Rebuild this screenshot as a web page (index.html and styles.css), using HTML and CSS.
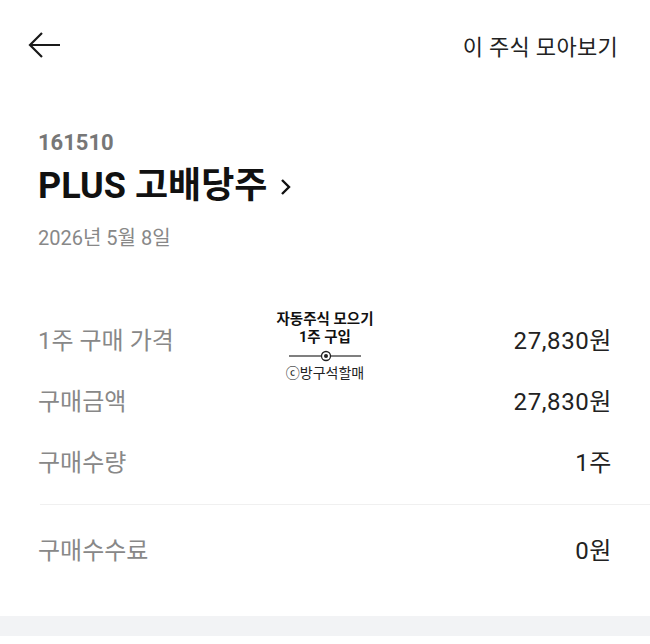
FILE: index.html
```html
<!DOCTYPE html>
<html>

<head>
    <link rel="stylesheet" href="styles.css">
</head>

<body>
    <div id="page">
        <div class="header">
            <svg class="back" width="34" height="28" viewBox="0 0 34 28">
                <path d="M15 2 L3 14 L15 26 M3 14 H33" fill="none" stroke="#1a1a1a" stroke-width="2.2" />
            </svg>
            <div class="header-link">이 주식 모아보기</div>
        </div>

        <div class="stock">
            <div class="code">161510</div>
            <div class="name">PLUS 고배당주
                <svg class="chevron" width="12" height="20" viewBox="0 0 12 20">
                    <path d="M2 3 L9 10 L2 17" fill="none" stroke="#111" stroke-width="2.4" />
                </svg>
            </div>
            <div class="date">2026년 5월 8일</div>
        </div>

        <div class="rows">
            <div class="row">
                <span class="label">1주 구매 가격</span>
                <span class="value">27,830원</span>
            </div>
            <div class="row">
                <span class="label">구매금액</span>
                <span class="value">27,830원</span>
            </div>
            <div class="row">
                <span class="label">구매수량</span>
                <span class="value">1주</span>
            </div>
            <div class="divider"></div>
            <div class="row">
                <span class="label">구매수수료</span>
                <span class="value">0원</span>
            </div>

            <div class="stamp">
                <div class="stamp-title">자동주식 모으기<br>1주 구입</div>
                <svg class="stamp-line" width="72" height="12" viewBox="0 0 72 12">
                    <line x1="0" y1="6" x2="72" y2="6" stroke="#555" stroke-width="1.5" />
                    <circle cx="37" cy="6" r="4.5" fill="#fff" stroke="#222" stroke-width="1.3" />
                    <circle cx="37" cy="6" r="2" fill="#222" />
                </svg>
                <div class="stamp-credit">ⓒ방구석할매</div>
            </div>
        </div>

        <div class="band"></div>
    </div>
</body>

</html>
```

FILE: styles.css
```css
body {
    margin: 0;
    background: #fff;
}

#page {
    width: 650px;
    height: 644px;
    font-family: Roboto, 'Noto Sans CJK KR', sans-serif;
    color: #1a1a1a;
    overflow: hidden;
}

.header {
    height: 90px;
    display: flex;
    align-items: center;
    justify-content: space-between;
    padding: 0 32px 0 27px;
}

.back {
    display: block;
}

.header-link {
    font-size: 22px;
    letter-spacing: 0.3px;
    color: #222;
}

.stock {
    padding: 0 38px;
}

.code {
    margin-top: 41px;
    font-size: 22px;
    line-height: 24px;
    font-weight: bold;
    color: #777;
}

.name {
    margin-top: 11px;
    font-size: 36px;
    line-height: 40px;
    font-weight: bold;
    color: #111;
    display: flex;
    align-items: center;
    gap: 13px;
}

.chevron {
    margin-top: 2px;
}

.date {
    margin-top: 20px;
    font-size: 20px;
    line-height: 24px;
    color: #888;
}

.rows {
    position: relative;
    margin-top: 58px;
}

.row {
    height: 61px;
    display: flex;
    align-items: center;
    justify-content: space-between;
    padding: 0 38px 0 38px;
    font-size: 24px;
}

.label {
    color: #888;
}

.value {
    color: #222;
    letter-spacing: 0.6px;
}

.divider {
    height: 1px;
    background: #f0f0f0;
    margin: 13px 0 13px 40px;
}

.stamp {
    position: absolute;
    top: 3px;
    left: 268px;
    width: 114px;
    display: flex;
    flex-direction: column;
    align-items: center;
    color: #111;
}

.stamp-title {
    font-size: 14.5px;
    line-height: 18px;
    font-weight: bold;
    text-align: center;
}

.stamp-line {
    display: block;
    margin-top: 3px;
}

.stamp-credit {
    margin-top: 2px;
    font-size: 14px;
    line-height: 18px;
    color: #222;
}

.band {
    height: 20px;
    margin-top: 37px;
    background: #f2f3f5;
}
```
